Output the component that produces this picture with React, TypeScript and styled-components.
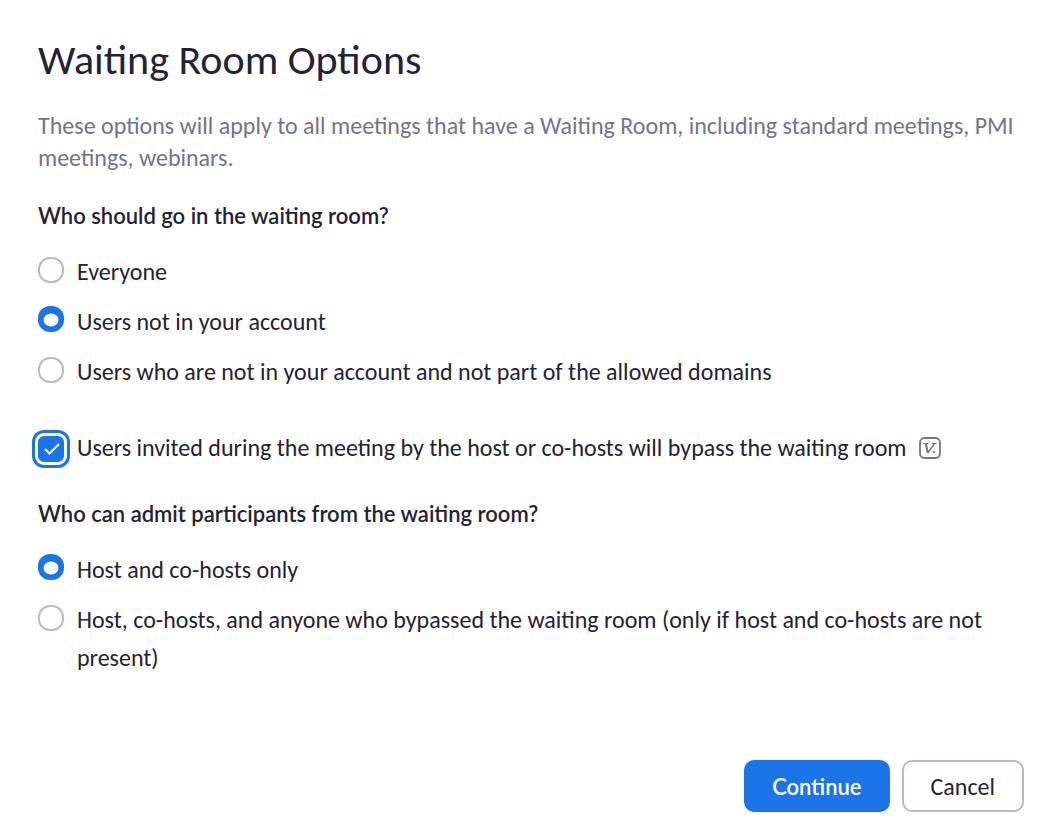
import React, { useState } from 'react';
import styled, { createGlobalStyle, css } from 'styled-components';

const GlobalStyle = createGlobalStyle`
  *, *::before, *::after { box-sizing: border-box; }
  body {
    margin: 0;
    background: #fff;
    color: #232333;
    font-family: Carlito, Lato, "Open Sans", sans-serif;
    font-size: 24px;
  }
`;

/* Carlito has no weight between regular and bold, so emphasis uses Lato semibold. */
const emphasis = css`
  font-family: Lato, "Open Sans", sans-serif;
  font-size: 22px;
  font-weight: 600;
`;

const Dialog = styled.form`
  display: flex;
  flex-direction: column;
  padding: 36px 38px 28px;
`;

const Title = styled.h1`
  margin: 0 0 26px;
  font-size: 42px;
  line-height: 48px;
  font-weight: 400;
`;

const Description = styled.p`
  margin: 0 0 26px;
  line-height: 32px;
  color: #747487;
`;

const Group = styled.fieldset`
  min-width: 0;
  margin: 0;
  padding: 0;
  border: 0;
`;

const Legend = styled.legend`
  margin: 0 0 21px;
  padding: 0;
  line-height: 32px;
  ${emphasis}
`;

const Options = styled.div`
  display: flex;
  flex-direction: column;
  gap: 12px;
`;

const Option = styled.label`
  display: flex;
  align-items: flex-start;
  gap: 13px;
  line-height: 38px;
`;

const Radio = styled.input`
  appearance: none;
  flex: none;
  width: 26px;
  height: 26px;
  margin: 4px 0 0;
  border: 2px solid #babacc;
  border-radius: 12px;
  background: #fff;
  &:checked {
    margin: 3px 0 0;
    border: 0;
    background: radial-gradient(ellipse 8px 7px at 13px 14px, #fff 86%, #1b74e8 98%);
  }
`;

const BypassRow = styled.div`
  display: flex;
  align-items: center;
  gap: 12px;
  margin: 38px 0 31px;
`;

const CheckLabel = styled.label`
  display: flex;
  align-items: center;
  gap: 13px;
  line-height: 38px;
`;

const CheckMark = styled.span`
  position: relative;
  display: grid;
  flex: none;
  width: 26px;
  height: 26px;
  margin-top: 2px;
  svg {
    position: absolute;
    inset: 0;
    pointer-events: none;
  }
`;

const Checkbox = styled.input`
  appearance: none;
  width: 26px;
  height: 26px;
  margin: 0;
  border: 2px solid #babacc;
  border-radius: 6px;
  background: #fff;
  box-shadow: 0 0 0 3px #fff, 0 0 0 6px #1b74e8;
  &:checked {
    border-color: #1b74e8;
    background: #1b74e8;
  }
`;

const Actions = styled.div`
  display: flex;
  justify-content: flex-end;
  gap: 12px;
  margin-top: 83px;
`;

const Button = styled.button<{ $primary?: boolean }>`
  height: 52px;
  padding: 0 ${(p) => (p.$primary ? 26 : 27)}px;
  border: 2px solid ${(p) => (p.$primary ? '#1b74e8' : '#babacc')};
  border-radius: 10px;
  background: ${(p) => (p.$primary ? '#1b74e8' : '#fff')};
  color: ${(p) => (p.$primary ? '#fff' : '#232333')};
  font: inherit;
  ${(p) => p.$primary && emphasis}
`;

const whoWaits = [
  'Everyone',
  'Users not in your account',
  'Users who are not in your account and not part of the allowed domains',
];

const whoAdmits = [
  'Host and co-hosts only',
  'Host, co-hosts, and anyone who bypassed the waiting room (only if host and co-hosts are not present)',
];

type RadioGroupProps = { name: string; legend: string; options: string[]; initial: number };

function RadioGroup({ name, legend, options, initial }: RadioGroupProps) {
  const [selected, setSelected] = useState(initial);
  return (
    <Group>
      <Legend>{legend}</Legend>
      <Options>
        {options.map((text, i) => (
          <Option key={text}>
            <Radio type="radio" name={name} checked={selected === i} onChange={() => setSelected(i)} />
            <span>{text}</span>
          </Option>
        ))}
      </Options>
    </Group>
  );
}

function VersionIcon() {
  return (
    <svg width="22" height="22" viewBox="0 0 22 22" fill="none" stroke="#747487" aria-hidden="true">
      <rect x="1" y="1" width="20" height="20" rx="4.5" strokeWidth="1.8" />
      <path d="M4.2 6.6h5M12.6 6.6h5" strokeWidth="1.4" />
      <path d="M6.9 6.6L8.6 15.8" strokeWidth="2" />
      <path d="M8.6 16L15.6 6.6" strokeWidth="1.5" />
      <circle cx="14.8" cy="15.2" r="1.1" fill="#747487" stroke="none" />
    </svg>
  );
}

export default function App() {
  const [bypass, setBypass] = useState(true);
  return (
    <>
      <GlobalStyle />
      <Dialog onSubmit={(e) => e.preventDefault()}>
        <Title>Waiting Room Options</Title>
        <Description>
          These options will apply to all meetings that have a Waiting Room, including standard
          meetings, PMI meetings, webinars.
        </Description>
        <RadioGroup name="waits" legend="Who should go in the waiting room?" options={whoWaits} initial={1} />
        <BypassRow>
          <CheckLabel>
            <CheckMark>
              <Checkbox type="checkbox" checked={bypass} onChange={() => setBypass(!bypass)} />
              <svg width="26" height="26" viewBox="0 0 26 26" fill="none" stroke="#fff" strokeWidth="2">
                <path d="M7 13L11.5 17.5L21 8" />
              </svg>
            </CheckMark>
            <span>Users invited during the meeting by the host or co-hosts will bypass the waiting room</span>
          </CheckLabel>
          <VersionIcon />
        </BypassRow>
        <RadioGroup name="admits" legend="Who can admit participants from the waiting room?" options={whoAdmits} initial={0} />
        <Actions>
          <Button type="submit" $primary>Continue</Button>
          <Button type="button">Cancel</Button>
        </Actions>
      </Dialog>
    </>
  );
}
